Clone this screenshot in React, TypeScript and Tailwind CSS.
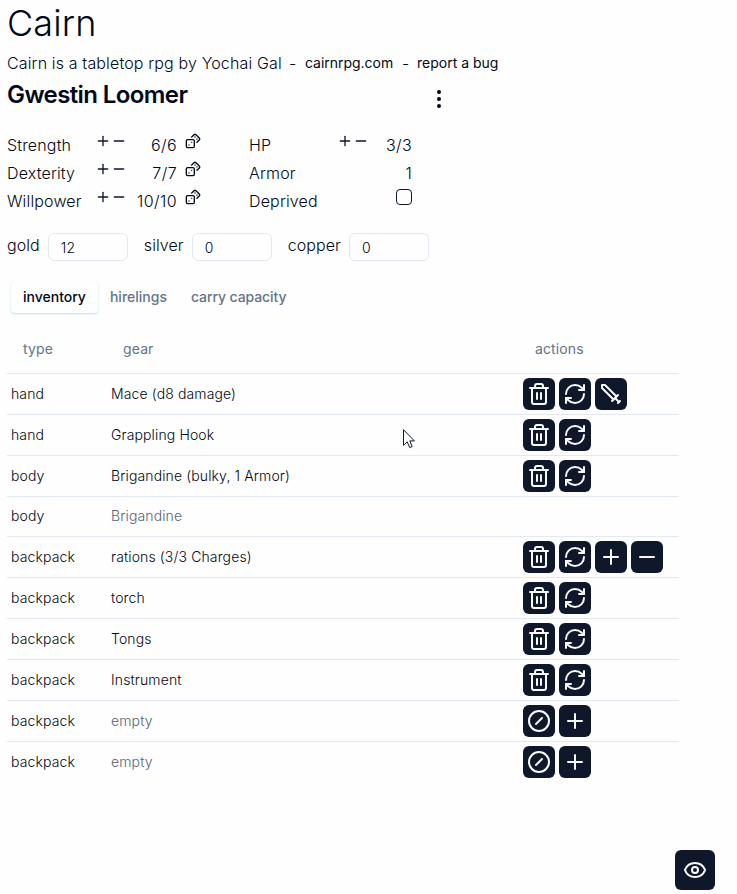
import React from "react";
import { Dices, Eye, Minus, MoreVertical, Plus, RefreshCw, Trash2 } from "lucide-react";

function SwordIcon() {
  return (
    <svg width="24" height="24" viewBox="0 0 24 24" fill="none" stroke="currentColor" strokeWidth="2" strokeLinecap="round" strokeLinejoin="round">
      <polyline points="14.5 17.5 3 6 3 3 6 3 17.5 14.5" />
      <line x1="13" y1="19" x2="19" y2="13" />
      <line x1="16" y1="16" x2="20" y2="20" />
      <line x1="19" y1="21" x2="21" y2="19" />
    </svg>
  );
}

function SlashedCircleIcon() {
  return (
    <svg width="24" height="24" viewBox="0 0 24 24" fill="none" stroke="currentColor" strokeWidth="2" strokeLinecap="round" strokeLinejoin="round">
      <circle cx="12" cy="12" r="10" />
      <line x1="9" y1="15" x2="15" y2="9" />
    </svg>
  );
}

type Action = "trash" | "refresh" | "sword" | "plus" | "minus" | "slash";

const icons: Record<Action, React.ReactNode> = {
  trash: <Trash2 size={24} />,
  refresh: <RefreshCw size={24} />,
  sword: <SwordIcon />,
  plus: <Plus size={24} />,
  minus: <Minus size={24} />,
  slash: <SlashedCircleIcon />,
};

const rows: { type: string; gear: string; muted?: boolean; actions: Action[] }[] = [
  { type: "hand", gear: "Mace (d8 damage)", actions: ["trash", "refresh", "sword"] },
  { type: "hand", gear: "Grappling Hook", actions: ["trash", "refresh"] },
  { type: "body", gear: "Brigandine (bulky, 1 Armor)", actions: ["trash", "refresh"] },
  { type: "body", gear: "Brigandine", muted: true, actions: [] },
  { type: "backpack", gear: "rations (3/3 Charges)", actions: ["trash", "refresh", "plus", "minus"] },
  { type: "backpack", gear: "torch", actions: ["trash", "refresh"] },
  { type: "backpack", gear: "Tongs", actions: ["trash", "refresh"] },
  { type: "backpack", gear: "Instrument", actions: ["trash", "refresh"] },
  { type: "backpack", gear: "empty", muted: true, actions: ["slash", "plus"] },
  { type: "backpack", gear: "empty", muted: true, actions: ["slash", "plus"] },
];

function Stepper() {
  return (
    <div className="flex h-4 w-8 text-[#0f172a]">
      <Plus size={16} />
      <Minus size={16} />
    </div>
  );
}

function Ability({ name, value }: { name: string; value: string }) {
  return (
    <div className="flex h-7">
      <span className="w-[88px]">{name}</span>
      <Stepper />
      <span className="w-[50px] text-right tracking-[0.025em]">{value}</span>
      <Dices size={16} className="ml-2" />
    </div>
  );
}

function Purse({ name, value }: { name: string; value: string }) {
  return (
    <label className="flex items-start">
      <span className="mr-2">{name}</span>
      <input
        readOnly
        value={value}
        className="h-7 w-20 rounded-md border border-[#e2e8f0] bg-transparent px-3 text-sm outline-none"
      />
    </label>
  );
}

export default function App() {
  return (
    <div className="flex h-[894px] w-[737px] flex-col bg-[#fefefe] pl-[7px] font-['Inter',sans-serif] font-light text-[#020817]">
      <h1 className="mt-[3px] h-10 text-4xl leading-10 tracking-[0.003em]">Cairn</h1>
      <div className="mt-2 flex h-6 items-center leading-6">
        <span className="w-[274px] whitespace-nowrap tracking-[0.009em]">Cairn is a tabletop rpg by Yochai Gal</span>
        <span className="ml-2 w-4">-</span>
        <a className="w-[89px] text-sm font-normal whitespace-nowrap tracking-[-0.002em]">cairnrpg.com</a>
        <span className="ml-2 w-[15px]">-</span>
        <a className="text-sm font-normal">report a bug</a>
      </div>
      <div className="flex h-[59px] w-[444px] justify-between">
        <h2 className="pt-1 text-2xl leading-8 font-semibold tracking-tight">Gwestin Loomer</h2>
        <MoreVertical size={24} className="mt-3" />
      </div>

      <div className="-mt-[1px] flex h-[84px] leading-6 tracking-[0.01em]">
        <div className="w-[242px]">
          <Ability name="Strength" value="6/6" />
          <Ability name="Dexterity" value="7/7" />
          <Ability name="Willpower" value="10/10" />
        </div>
        <div className="w-[163px]">
          <div className="flex h-7">
            <span className="w-[88px]">HP</span>
            <Stepper />
            <span className="flex-1 text-right tracking-[0.02em]">3/3</span>
          </div>
          <div className="flex h-7 justify-between">
            <span>Armor</span>
            <span>1</span>
          </div>
          <div className="flex h-7 justify-between">
            <span>Deprived</span>
            <span className="h-4 w-4 rounded border border-[#0f172a]" />
          </div>
        </div>
      </div>

      <div className="mt-4 flex h-7 gap-4 leading-6 tracking-[0.005em]">
        <Purse name="gold" value="12" />
        <Purse name="silver" value="0" />
        <Purse name="copper" value="0" />
      </div>

      <div className="mt-5 ml-1 flex h-8 text-sm leading-5 font-medium text-[#64748b]">
        <span className="rounded px-3 pt-[6px] text-[#020817] shadow-[0_1px_2px_rgba(120,200,220,0.5)]">inventory</span>
        <span className="px-3 pt-[6px]">hirelings</span>
        <span className="px-3 pt-[6px] tracking-[-0.007em]">carry capacity</span>
      </div>

      <table className="mt-[12px] w-[672px] table-fixed border-collapse text-sm tracking-[0.009em]">
        <colgroup>
          <col className="w-[100px]" />
          <col className="w-[412px]" />
          <col className="w-[160px]" />
        </colgroup>
        <thead>
          <tr className="h-12 border-b border-[#e2e8f0] text-left text-[#64748b]">
            <th className="px-4 font-normal">type</th>
            <th className="px-4 font-normal">gear</th>
            <th className="px-4 font-normal">actions</th>
          </tr>
        </thead>
        <tbody>
          {rows.map((row, i) => (
            <tr key={i} className="border-b border-[#e2e8f0] last:border-0">
              <td className="px-1 py-0">{row.type}</td>
              <td className={row.muted ? "px-1 py-0 text-[#566376]" : "px-1 py-0"}>{row.gear}</td>
              <td className="p-1">
                <div className={row.actions.length ? "flex h-8 gap-1" : "h-[31px]"}>
                  {row.actions.map((a, j) => (
                    <button key={j} className="flex h-8 w-8 items-center justify-center rounded-md bg-[#0f172a] text-[#f8fafc]">
                      {icons[a]}
                    </button>
                  ))}
                </div>
              </td>
            </tr>
          ))}
        </tbody>
      </table>

      <div className="mt-auto mb-1 flex justify-end pr-[22px]">
        <button className="flex h-10 w-10 items-center justify-center rounded-md bg-[#0f172a] text-[#f8fafc]">
          <Eye size={24} />
        </button>
      </div>

      <svg className="absolute top-[429px] left-[403px]" width="12" height="20" viewBox="0 0 12 20">
        <path d="M0.5 0.7V16.3L4.2 12.8L6.7 18.6L9.2 17.5L6.8 11.9H11.4Z" fill="#fff" stroke="#0f172a" strokeWidth="1" />
      </svg>
    </div>
  );
}
